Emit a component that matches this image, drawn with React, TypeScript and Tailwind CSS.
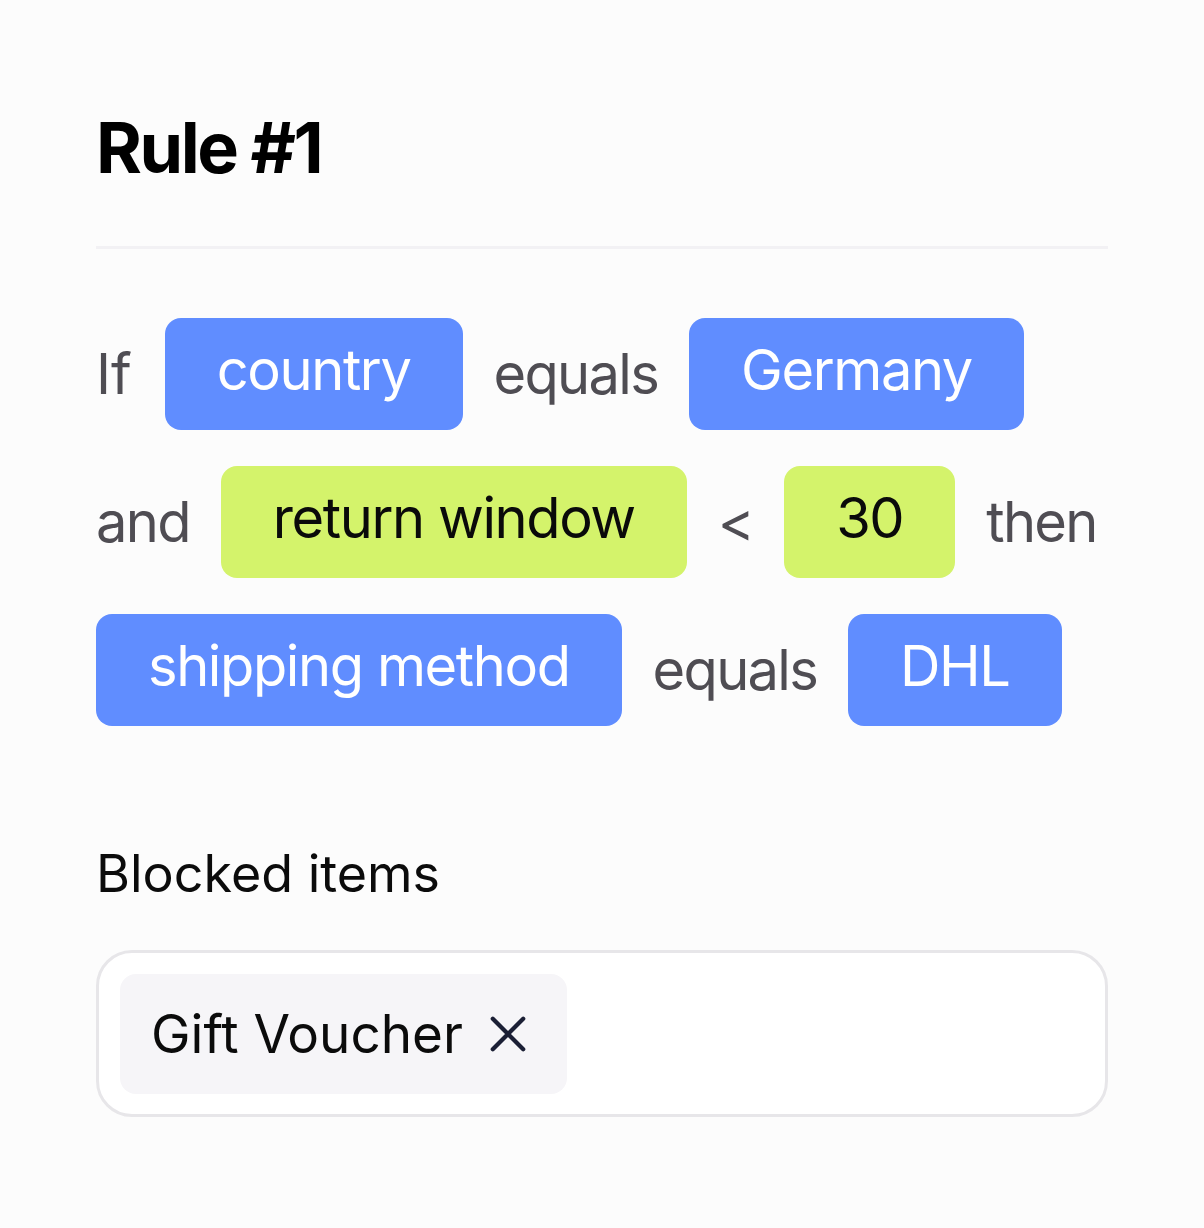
import React from "react";

function Chip({ label, tone }: { label: string; tone: "blue" | "green" }) {
  const colors = tone === "blue" ? "bg-[#608dff] text-white" : "bg-[#d4f36b] text-[#0a0a0a]";
  return (
    <div className={`${colors} h-[112px] px-[52px] pb-[8px] rounded-[16px] flex items-center text-[56px] leading-none tracking-[-0.025em] whitespace-nowrap`}>
      {label}
    </div>
  );
}

function Word({ children }: { children: React.ReactNode }) {
  return <span className="text-[56px] leading-none tracking-[-0.03em] text-[#4f4d53] whitespace-nowrap">{children}</span>;
}

export default function App() {
  return (
    <div className="min-h-screen bg-[#fcfcfc] px-[96px] pt-[113px] pb-[100px] font-['Inter',sans-serif]">
      <h1 className="text-[70px] leading-none font-bold tracking-[-0.035em] text-black">Rule #1</h1>

      <div className="mt-[63px] h-[3px] bg-[#f2f1f4]" />

      <div className="mt-[69px] flex flex-col gap-[36px]">
        <div className="flex items-center gap-[31px]">
          <span className="text-[56px] leading-none text-[#4f4d53] pr-[2px]">If</span>
          <Chip label="country" tone="blue" />
          <Word>equals</Word>
          <Chip label="Germany" tone="blue" />
        </div>
        <div className="flex items-center gap-[31px]">
          <Word>and</Word>
          <Chip label="return window" tone="green" />
          <Word>&lt;</Word>
          <Chip label="30" tone="green" />
          <Word>then</Word>
        </div>
        <div className="flex items-center gap-[31px]">
          <Chip label="shipping method" tone="blue" />
          <Word>equals</Word>
          <Chip label="DHL" tone="blue" />
        </div>
      </div>

      <p className="mt-[122px] text-[52px] leading-none text-[#0b0b0b]">Blocked items</p>

      <div className="mt-[50px] border-[3px] border-[#e7e6e9] bg-white rounded-[36px] p-[21px] pb-[20px] flex">
        <div className="h-[120px] bg-[#f6f5f8] rounded-[16px] pl-[31px] pr-[40px] flex items-center gap-[26px]">
          <span className="text-[53px] leading-none text-[#0b0b0b]">Gift Voucher</span>
          <svg width="38" height="38" viewBox="0 0 40 40" fill="none" stroke="#1b1f35" strokeWidth="4.5" strokeLinecap="round">
            <path d="M4 4L36 36M36 4L4 36" />
          </svg>
        </div>
      </div>
    </div>
  );
}
